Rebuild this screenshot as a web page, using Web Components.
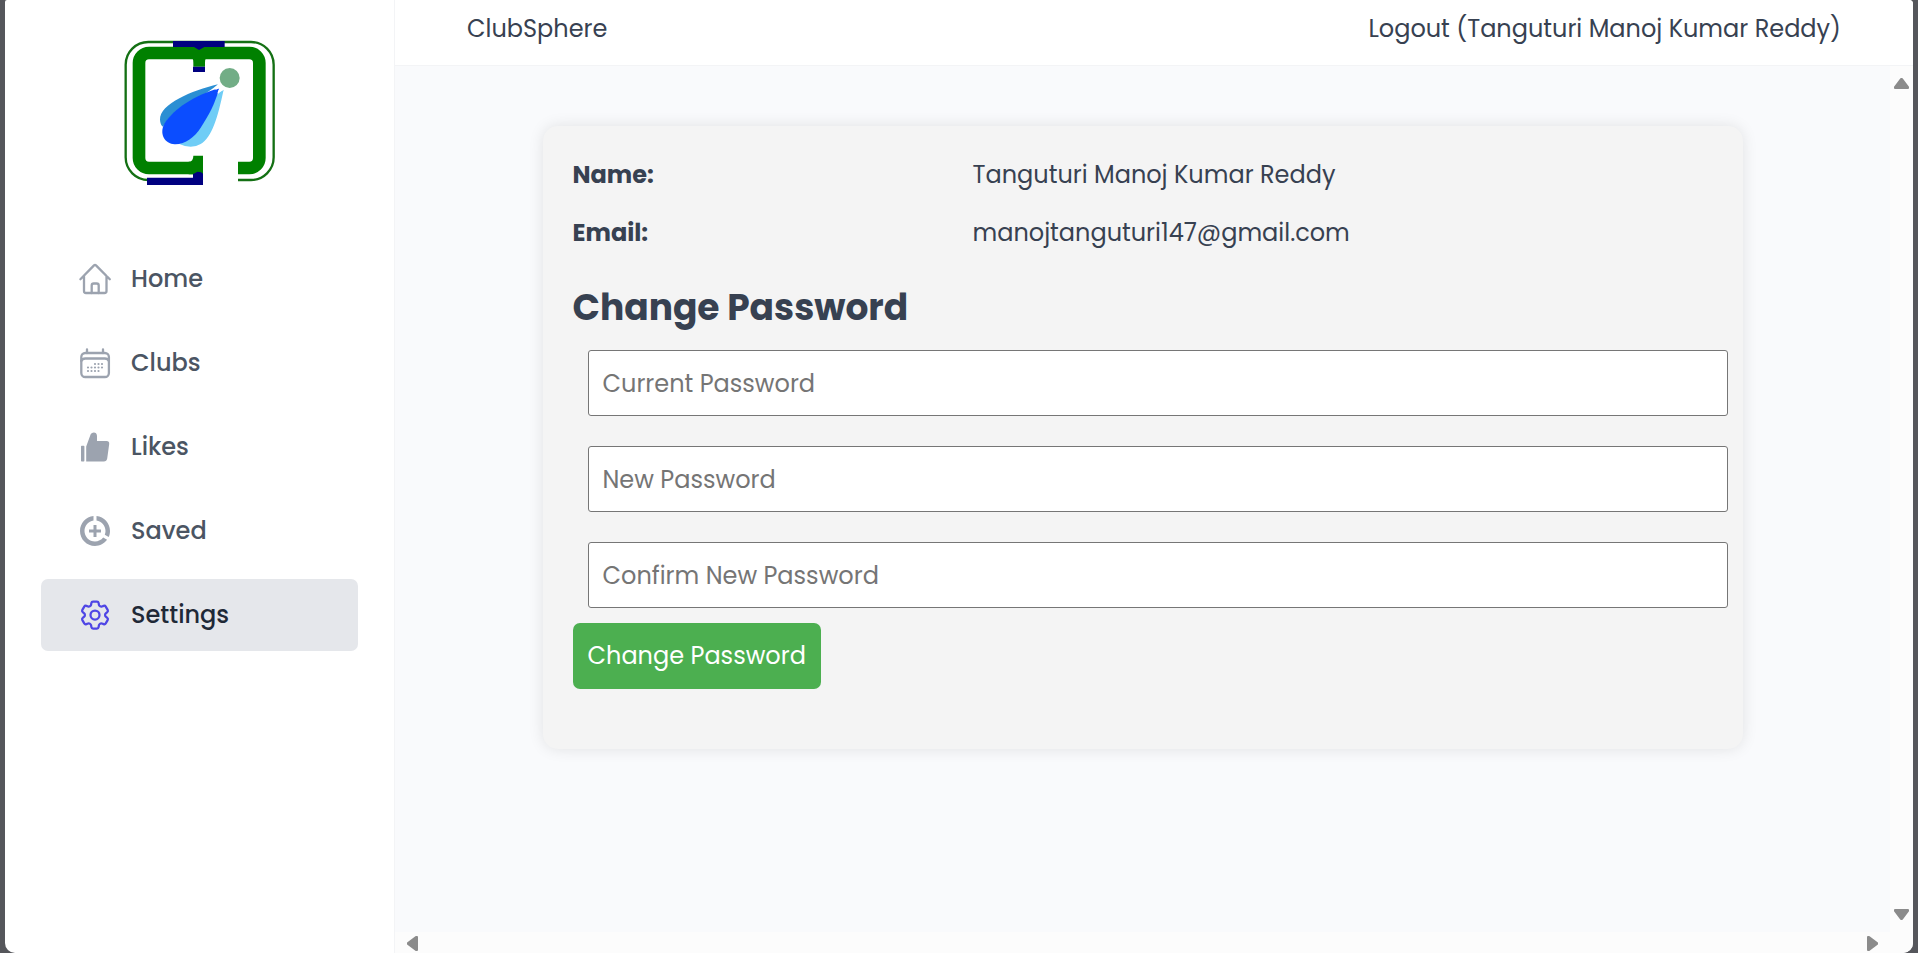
<!DOCTYPE html>
<html lang="en">
<head>
<meta charset="utf-8">
<meta name="viewport" content="width=device-width, initial-scale=1">
<title>ClubSphere</title>
<style>
  html, body { height: 100%; margin: 0; }
  body {
    background: #55565b;
    color: #374151;
    font-family: Poppins, Inter, "Open Sans", sans-serif;
    font-size: 24px;
    line-height: 36px;
    overflow: hidden;
  }
</style>
</head>
<body>
<club-app>
  <club-sidebar slot="sidebar">
    <club-logo slot="logo"></club-logo>
    <nav-item icon="home" href="#home">Home</nav-item>
    <nav-item icon="calendar" href="#clubs">Clubs</nav-item>
    <nav-item icon="thumb" href="#likes">Likes</nav-item>
    <nav-item icon="saved" href="#saved">Saved</nav-item>
    <nav-item icon="cog" href="#settings" active>Settings</nav-item>
  </club-sidebar>
  <club-topbar slot="topbar">
    <span>ClubSphere</span>
    <span slot="action">Logout (Tanguturi Manoj Kumar Reddy)</span>
  </club-topbar>
  <scroll-pane>
    <profile-card>
      <profile-row label="Name:">Tanguturi Manoj Kumar Reddy</profile-row>
      <profile-row label="Email:">manojtanguturi147@gmail.com</profile-row>
      <password-form></password-form>
    </profile-card>
  </scroll-pane>
</club-app>

<script>
const define = (name, html, setup) => {
  const template = document.createElement('template');
  template.innerHTML = html;
  customElements.define(name, class extends HTMLElement {
    constructor() {
      super();
      this.attachShadow({ mode: 'open' }).append(template.content.cloneNode(true));
    }
    connectedCallback() {
      if (setup) setup(this, this.shadowRoot);
    }
  });
};

/* Window frame: sidebar beside a column with the top bar and the page */
define('club-app', `
  <style>
    :host {
      display: grid;
      grid-template-columns: 390px minmax(0, 1fr);
      height: 100vh;
      box-sizing: border-box;
      margin: 0 5px;
      overflow: hidden;
      border-radius: 2px 4px 10px 10px;
      background: #fff;
    }
    .main { display: flex; flex-direction: column; min-height: 0; }
  </style>
  <slot name="sidebar"></slot>
  <div class="main"><slot name="topbar"></slot><slot></slot></div>
`);

define('club-sidebar', `
  <style>
    :host {
      display: flex;
      flex-direction: column;
      gap: 55px;
      padding: 38px 36px;
      border-right: 1px solid #f3f4f6;
    }
    nav { display: flex; flex-direction: column; gap: 12px; }
  </style>
  <slot name="logo"></slot>
  <nav><slot></slot></nav>
`);

define('club-logo', `
  <style>
    :host { display: flex; justify-content: center; }
    svg { width: 160px; height: 150px; }
  </style>
  <svg viewBox="60 54 480 450" role="img" aria-label="ClubSphere logo">
    <rect x="77" y="66" width="444" height="414" rx="68" fill="#fff" stroke="#147014" stroke-width="7"/>
    <rect x="117" y="99" width="361" height="345" rx="30" fill="#fff" stroke="#008000" stroke-width="38"/>
    <path d="M278 116h39q-2 3-2 12v12h-35v-12q0-9-2-12z" fill="#008000"/>
    <path d="M219 63h155v18h-61l-16 9-15-9h-63z" fill="#000080"/>
    <path d="M279 140h36v16h-36z" fill="#000080"/>
    <path d="M309 404h105v100H309z" fill="#fff"/>
    <path d="M266 425q14 0 14-18h29v56h-43z" fill="#008000"/>
    <path d="M141 473h138v-11q4-1 13-7 14 0 17 7v33H141z" fill="#000080"/>
    <path d="M354 193C275 212 179 252 180 299q1 16 9 21 20-40 80-72 60-32 85-55z" fill="#2b8fd3"/>
    <path d="M371 209C340 227 335 245 313 290c-20 42-45 68-75 82q36 17 64 0c34-21 50-75 69-163z" fill="#6fcdf6"/>
    <path d="M358 205C285 225 220 268 194 310c-18 31 0 62 30 63 31 1 59-20 79-51 26-42 39-64 55-117z" fill="#0b4dff"/>
    <path d="M354 193l-8 17 12-5-6 14 19-10-9-15z" fill="#fff"/>
    <circle cx="389" cy="174" r="30" fill="#72ad86"/>
  </svg>
`);

const icons = {
  home: `<g fill="none" stroke="currentColor" stroke-width="2.300" stroke-linecap="round" stroke-linejoin="round">
    <path d="M3.4 18.2 17 4.4q1-1 2 0l13.800 13.800M7 15v15q0 2 2 2h18.500q2 0 2-2V15"/>
    <path d="M14.700 32v-7.500q0-2 2-2h3q2 0 2 2V32"/></g>`,
  calendar: `<g fill="none" stroke="currentColor" stroke-width="2.300" stroke-linecap="round">
    <rect x="4.300" y="8" width="27.600" height="24" rx="4"/>
    <path d="M10 4.500V8M26 4.500V8M4.300 16q1-2.500 4-2.500h19.600q3 0 4 2.500"/></g>
    <path fill="none" stroke="currentColor" stroke-width="2.200" stroke-linecap="round" d="M18 19h0M21.500 19h0M25 19h0M11 22.500h0M14.500 22.500h0M18 22.500h0M21.500 22.500h0M25 22.500h0M11 26h0M14.500 26h0M18 26h0M21.500 26h0"/>`,
  thumb: `<path fill="currentColor" d="M4 17.500q0-.7.7-.7h2q.700 0 .700.700v14.200q0 .700-.700.700h-2q-.700 0-.700-.700zM9.200 17.500 13.400 6c.6-3 6.600-4 6.600 1v5h9.500q3 0 2.700 3l-2 14.500q-.5 2.900-3.400 2.900H9.200z"/>`,
  saved: `<path fill="currentColor" transform="scale(1.500)" d="M11 8v3H8v2h3v3h2v-3h3v-2h-3V8h-2zm2-5.950v3.030c3.390.490 6 3.390 6 6.920 0 .900-.180 1.750-.480 2.540l2.600 1.530c.560-1.240.880-2.620.880-4.070 0-5.180-3.950-9.450-9-9.950zM12 19c-3.870 0-7-3.130-7-7 0-3.530 2.610-6.430 6-6.920V2.050c-5.060.500-9 4.760-9 9.950 0 5.520 4.470 10 9.990 10 3.310 0 6.240-1.610 8.060-4.090l-2.600-1.530C16.170 17.980 14.210 19 12 19z"/>`,
  cog: `<g fill="none" stroke="currentColor" stroke-width="1.500" stroke-linejoin="round" transform="scale(1.500)"><path d="M9.594 3.940c.09-.542.56-.94 1.110-.94h2.593c.55 0 1.020.398 1.110.94l.213 1.281c.063.374.313.686.645.87.074.04.147.083.22.127.325.196.72.257 1.075.124l1.217-.456a1.125 1.125 0 0 1 1.370.49l1.296 2.247a1.125 1.125 0 0 1-.26 1.431l-1.003.827c-.293.241-.438.613-.43.992a7.723 7.723 0 0 1 0 .255c-.008.378.137.75.43.991l1.004.827c.424.35.534.955.26 1.430l-1.298 2.247a1.125 1.125 0 0 1-1.369.491l-1.217-.456c-.355-.133-.75-.072-1.076.124a6.470 6.470 0 0 1-.22.128c-.331.183-.581.495-.644.869l-.213 1.281c-.09.543-.56.94-1.110.94h-2.594c-.55 0-1.019-.398-1.110-.94l-.213-1.281c-.062-.374-.312-.686-.644-.87a6.520 6.520 0 0 1-.22-.127c-.325-.196-.72-.257-1.076-.124l-1.217.456a1.125 1.125 0 0 1-1.369-.49l-1.297-2.247a1.125 1.125 0 0 1 .26-1.431l1.004-.827c.292-.24.437-.613.43-.991a6.932 6.932 0 0 1 0-.255c.007-.38-.138-.751-.43-.992l-1.004-.827a1.125 1.125 0 0 1-.26-1.430l1.297-2.247a1.125 1.125 0 0 1 1.370-.491l1.216.456c.356.133.751.072 1.076-.124.072-.044.146-.086.22-.128.332-.183.582-.495.644-.869l.214-1.280Z"/><circle cx="12" cy="12" r="3"/></g>`
};

define('nav-item', `
  <style>
    :host { display: block; }
    a {
      display: flex;
      align-items: center;
      gap: 18px;
      padding: 18px 36px;
      border-radius: 7px;
      color: #4b5563;
      font-weight: 500;
      text-decoration: none;
    }
    svg { flex: none; width: 36px; height: 36px; color: #9ca3af; }
    :host([active]) a { background: #e5e7eb; color: #1f2937; }
    :host([active]) svg { color: #4f46e5; }
  </style>
  <a><svg viewBox="0 0 36 36" aria-hidden="true"></svg><slot></slot></a>
`, (host, root) => {
  const link = root.querySelector('a');
  link.href = host.getAttribute('href');
  if (host.hasAttribute('active')) link.setAttribute('aria-current', 'page');
  root.querySelector('svg').innerHTML = icons[host.getAttribute('icon')];
});

define('club-topbar', `
  <style>
    :host {
      display: flex;
      justify-content: space-between;
      padding: 11px 72px 18px;
      border-bottom: 1px solid #f3f4f6;
      background: #fff;
    }
    button {
      padding: 0;
      border: 0;
      background: none;
      color: inherit;
      font: inherit;
      cursor: pointer;
    }
  </style>
  <slot></slot>
  <button type="button"><slot name="action"></slot></button>
`);

/* Page area with classic scroll bars on its right and lower sides */
define('scroll-pane', `
  <style>
    :host {
      display: grid;
      grid-template-columns: minmax(0, 1fr) 23px;
      grid-template-rows: minmax(0, 1fr) 21px;
      flex: 1;
      min-height: 0;
      background: #fcfcfc;
    }
    .page { padding: 60px; background: #f9fafc; }
    .bar { display: flex; justify-content: space-between; align-items: center; }
    .y { flex-direction: column; padding: 12px 0; }
    .x { padding: 2px 12px 0; }
    svg { fill: #8b8b8b; stroke: #8b8b8b; stroke-width: 2; stroke-linejoin: round; }
  </style>
  <div class="page"><slot></slot></div>
  <div class="bar y" aria-hidden="true">
    <svg width="15" height="11" viewBox="0 0 15 11"><path d="M7 1h1l6 8v1H1V9z"/></svg>
    <svg width="15" height="11" viewBox="0 0 15 11"><path d="M1 1h13v1L8 10H7L1 2z"/></svg>
  </div>
  <div class="bar x" aria-hidden="true">
    <svg width="11" height="15" viewBox="0 0 11 15"><path d="M10 1v13H9L1 8V7l8-6z"/></svg>
    <svg width="11" height="15" viewBox="0 0 11 15"><path d="M1 1h1l8 6v1l-8 6H1z"/></svg>
  </div>
`);

define('profile-card', `
  <style>
    :host {
      display: flex;
      flex-direction: column;
      gap: 22px;
      max-width: 1200px;
      box-sizing: border-box;
      margin: 0 auto;
      padding: 31px 30px 60px;
      border-radius: 15px;
      background: #f4f4f4;
      box-shadow: 0 0 15px rgba(0, 0, 0, .1);
    }
  </style>
  <slot></slot>
`);

define('profile-row', `
  <style>
    :host { display: grid; grid-template-columns: 1fr 2fr; gap: 30px; }
    strong { font-weight: 700; }
  </style>
  <strong></strong><span><slot></slot></span>
`, (host, root) => {
  root.querySelector('strong').textContent = host.getAttribute('label');
});

define('password-form', `
  <style>
    :host { display: block; padding-top: 8px; }
    h2 { margin: 0 0 15px; font-size: 36px; line-height: 54px; font-weight: 700; }
    form { display: flex; flex-direction: column; align-items: flex-start; gap: 15px; }
    .fields { display: flex; flex-direction: column; gap: 30px; align-self: stretch; margin: 0 -15px 0 15px; }
    input {
      height: 66px;
      box-sizing: border-box;
      padding: 0 14px;
      border: 1px solid #767676;
      border-radius: 3px;
      background: #fff;
      color: inherit;
      font: inherit;
    }
    input::placeholder { color: #757575; }
    button {
      padding: 15px;
      border: 0;
      border-radius: 7px;
      background: #4caf50;
      color: #fff;
      font: inherit;
      cursor: pointer;
    }
  </style>
  <h2>Change Password</h2>
  <form>
    <div class="fields">
      <input type="password" placeholder="Current Password" aria-label="Current Password" autocomplete="current-password">
      <input type="password" placeholder="New Password" aria-label="New Password" autocomplete="new-password">
      <input type="password" placeholder="Confirm New Password" aria-label="Confirm New Password" autocomplete="new-password">
    </div>
    <button type="button">Change Password</button>
  </form>
`);
</script>
</body>
</html>
